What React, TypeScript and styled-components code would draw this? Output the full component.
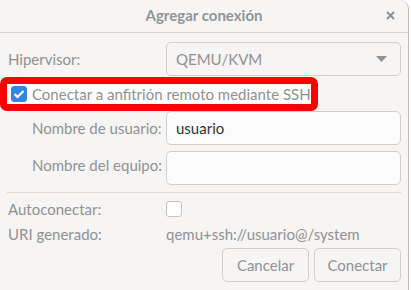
import React from "react";
import styled, { createGlobalStyle } from "styled-components";

const Global = createGlobalStyle`
  html, body { margin: 0; padding: 0; background: #ffffff; }
  body { font-family: Lato, "Noto Sans", sans-serif; }
`;

const Window = styled.div`
  width: 409px;
  height: 290px;
  background: #f6f5f4;
  border-right: 1px solid #bdb8b3;
  border-top-right-radius: 9px;
  box-sizing: border-box;
  display: flex;
  flex-direction: column;
  overflow: hidden;
`;

const Header = styled.div`
  height: 33px;
  flex: none;
  box-sizing: border-box;
  border-bottom: 1px solid #d6d1cd;
  display: grid;
  grid-template-columns: 1fr auto 1fr;
  align-items: center;
  padding-bottom: 2px;
`;

const Title = styled.div`
  grid-column: 2;
  font-size: 15px;
  font-weight: 700;
  color: #929595;
  white-space: nowrap;
`;

const CloseBtn = styled.div`
  grid-column: 3;
  justify-self: end;
  margin-right: 13px;
  width: 10px;
  height: 10px;
  display: flex;
  align-items: center;
  justify-content: center;
`;

const Body = styled.div`
  padding: 9px 7px 0 8px;
  display: flex;
  flex-direction: column;
`;

const FormGrid = styled.div`
  display: grid;
  grid-template-columns: 158px 1fr;
  align-items: center;
`;

const Label = styled.div<{ $indent?: boolean }>`
  font-size: 15px;
  color: #8f9293;
  white-space: nowrap;
  padding-left: ${(p) => (p.$indent ? "24px" : "0")};
`;

const Field = styled.div<{ $top?: number }>`
  height: 34px;
  box-sizing: border-box;
  border: 1px solid #d3cec9;
  border-radius: 5px;
  display: flex;
  align-items: center;
  padding: 0 9px;
  font-size: 15px;
  white-space: nowrap;
  margin-top: ${(p) => p.$top ?? 0}px;
`;

const Entry = styled(Field)`
  background: #fcfcfc;
  color: #2e3436;
`;

const Select = styled(Field)`
  background: #f6f5f4;
  color: #8f9293;
  justify-content: space-between;
  padding-right: 13px;
`;

const Highlight = styled.div`
  grid-column: 1 / span 2;
  margin: 1px 0 0 -8px;
  width: 318px;
  height: 34px;
  box-sizing: border-box;
  border: 7px solid #ff0000;
  border-radius: 7px;
  background: #fdfdfd;
  display: flex;
  align-items: center;
  gap: 5px;
  padding-left: 4px;
`;

const CheckText = styled.span`
  font-size: 15px;
  color: #8f9293;
  white-space: nowrap;
`;

const Check = styled.div<{ $on?: boolean }>`
  width: 16px;
  height: 16px;
  box-sizing: border-box;
  border-radius: 3px;
  background: ${(p) => (p.$on ? "#3584e4" : "#ffffff")};
  border: 1px solid ${(p) => (p.$on ? "#3584e4" : "#c8c2bc")};
  display: flex;
  align-items: center;
  justify-content: center;
  flex: none;
`;

const Separator = styled.div`
  height: 1px;
  background: #dcd8d4;
  margin: 7px 0 0 -1px;
`;

const InfoGrid = styled.div`
  display: grid;
  grid-template-columns: 158px 1fr;
  grid-auto-rows: 25px;
  align-items: center;
  margin-top: 3px;
`;

const Value = styled.div`
  font-size: 15px;
  color: #8f9293;
  white-space: nowrap;
`;

const Buttons = styled.div`
  display: flex;
  justify-content: flex-end;
  gap: 5px;
  margin-top: 2px;
`;

const Button = styled.div`
  width: 87px;
  height: 34px;
  box-sizing: border-box;
  border: 1px solid #d3cec9;
  border-radius: 5px;
  background: #f6f5f4;
  color: #8f9293;
  font-size: 15px;
  display: flex;
  align-items: center;
  justify-content: center;
`;

export default function App() {
  return (
    <>
      <Global />
      <Window>
        <Header>
          <Title>Agregar conexión</Title>
          <CloseBtn>
            <svg width="9" height="9" viewBox="0 0 9 9">
              <path d="M1 1 L8 8 M8 1 L1 8" stroke="#8f9293" strokeWidth="2" />
            </svg>
          </CloseBtn>
        </Header>
        <Body>
          <FormGrid>
            <Label>Hipervisor:</Label>
            <Select>
              <span>QEMU/KVM</span>
              <svg width="11" height="6" viewBox="0 0 11 6">
                <path d="M0 0 L11 0 L5.5 6 Z" fill="#8f9293" />
              </svg>
            </Select>
            <Highlight>
              <Check $on>
                <svg width="12" height="10" viewBox="0 0 12 10">
                  <path d="M1.5 5 L4.5 8 L10.5 2" stroke="#fff" strokeWidth="2.2" fill="none" />
                </svg>
              </Check>
              <CheckText>Conectar a anfitrión remoto mediante SSH</CheckText>
            </Highlight>
            <Label $indent>Nombre de usuario:</Label>
            <Entry>usuario</Entry>
            <Label $indent>Nombre del equipo:</Label>
            <Entry $top={6} />
          </FormGrid>
          <Separator />
          <InfoGrid>
            <Label>Autoconectar:</Label>
            <Check />
            <Label>URI generado:</Label>
            <Value>qemu+ssh://usuario@/system</Value>
          </InfoGrid>
          <Buttons>
            <Button>Cancelar</Button>
            <Button>Conectar</Button>
          </Buttons>
        </Body>
      </Window>
    </>
  );
}
